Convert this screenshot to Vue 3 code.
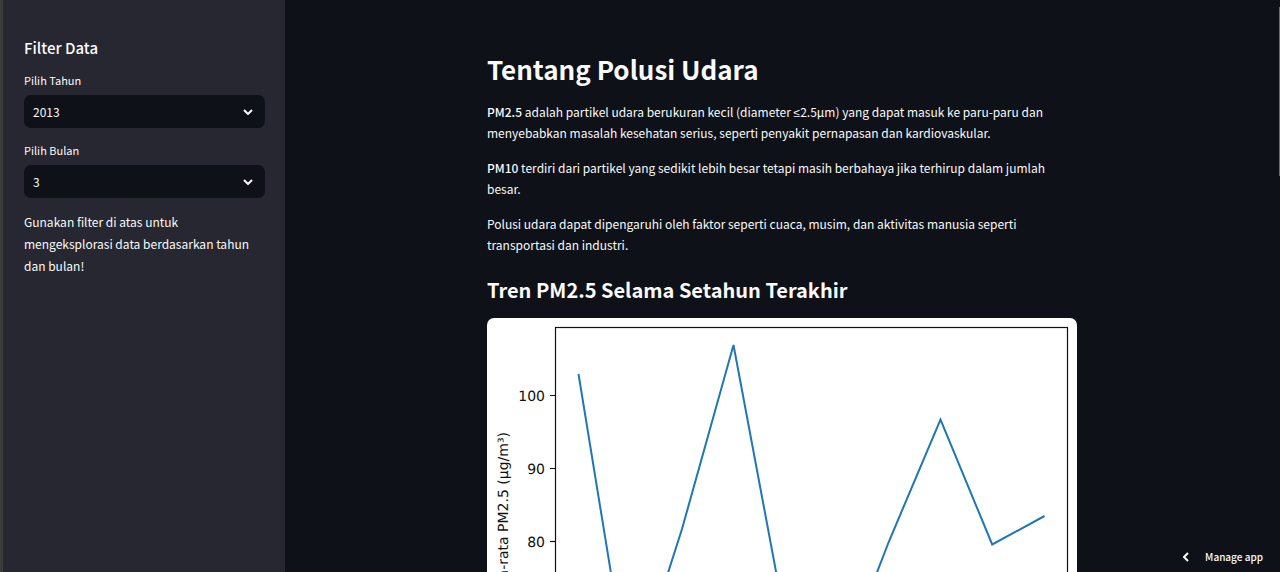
<script setup>
import { ref } from 'vue'

const year = ref('2013')
const month = ref('3')
const years = ['2013', '2014', '2015', '2016', '2017']
const months = Array.from({ length: 12 }, (_, i) => String(i + 1))

const ticks = [
  { label: '100', y: 77 },
  { label: '90', y: 150 },
  { label: '80', y: 223 },
  { label: '70', y: 296 },
  { label: '60', y: 369 }
]
const trend = [
  [91.5, 56], [143.2, 373], [195, 211], [246.5, 27], [298.3, 303],
  [350, 358], [401.7, 224], [453.5, 101.5], [505.2, 226.5], [557.5, 198]
].map((p) => p.join(',')).join(' ')
</script>

<template>
  <div class="app">
    <aside class="sidebar">
      <h2 class="filter-title">Filter Data</h2>
      <div class="field">
        <label for="year">Pilih Tahun</label>
        <div class="select-wrap">
          <select id="year" v-model="year">
            <option v-for="y in years" :key="y">{{ y }}</option>
          </select>
          <svg class="chevron" viewBox="0 0 10 6" aria-hidden="true"><path d="M1 1l4 4 4-4" /></svg>
        </div>
      </div>
      <div class="field">
        <label for="month">Pilih Bulan</label>
        <div class="select-wrap">
          <select id="month" v-model="month">
            <option v-for="m in months" :key="m">{{ m }}</option>
          </select>
          <svg class="chevron" viewBox="0 0 10 6" aria-hidden="true"><path d="M1 1l4 4 4-4" /></svg>
        </div>
      </div>
      <p class="hint">Gunakan filter di atas untuk mengeksplorasi data berdasarkan tahun dan bulan!</p>
    </aside>

    <main class="main">
      <article class="content">
        <h1>Tentang Polusi Udara</h1>
        <p><strong>PM2.5</strong> adalah partikel udara berukuran kecil (diameter <span class="math">≤</span>2.5µm) yang dapat masuk ke paru-paru dan menyebabkan masalah kesehatan serius, seperti penyakit pernapasan dan kardiovaskular.</p>
        <p><strong>PM10</strong> terdiri dari partikel yang sedikit lebih besar tetapi masih berbahaya jika terhirup dalam jumlah besar.</p>
        <p>Polusi udara dapat dipengaruhi oleh faktor seperti cuaca, musim, dan aktivitas manusia seperti transportasi dan industri.</p>
        <h2>Tren PM2.5 Selama Setahun Terakhir</h2>
        <figure class="chart">
          <svg viewBox="0 0 590 460" role="img" aria-label="Tren PM2.5">
            <rect class="axis" x="68.5" y="9.5" width="512" height="400" />
            <g v-for="t in ticks" :key="t.label">
              <line class="axis" x1="63" x2="68" :y1="t.y + 0.5" :y2="t.y + 0.5" />
              <text x="58" :y="t.y + 6" text-anchor="end">{{ t.label }}</text>
            </g>
            <text transform="translate(21 114) rotate(-90)" text-anchor="end">Rata-rata PM2.5 (µg/m³)</text>
            <polyline class="trend" :points="trend" />
          </svg>
        </figure>
      </article>
      <span class="scroll-thumb"></span>
      <button class="manage" type="button">
        <svg viewBox="0 0 6 10" aria-hidden="true"><path d="M5 1L1 5l4 4" /></svg>
        <span>Manage app</span>
      </button>
    </main>
  </div>
</template>

<style>
body {
  margin: 0;
  background: #0e1117;
}
</style>

<style scoped>
.app {
  display: flex;
  height: 100vh;
  overflow: hidden;
  color: #fafafa;
  background: #0e1117;
  font-family: "Noto Sans CJK SC", "Noto Sans", sans-serif;
  font-size: 12px;
  line-height: 21px;
}
h1, h2, p, figure {
  margin: 0;
}
.sidebar {
  box-sizing: border-box;
  flex: 0 0 285px;
  padding: 36px 20px 0 21px;
  border-left: 3px solid #3b3b39;
  background: #262730;
}
.filter-title {
  font-size: 15px;
  line-height: 24px;
  font-weight: 500;
  margin-bottom: 10px;
}
.field {
  margin-bottom: 12px;
}
.field label {
  display: block;
  font-size: 11px;
  line-height: 20px;
  margin-bottom: 5px;
}
.select-wrap {
  position: relative;
}
select {
  display: block;
  width: 100%;
  height: 33px;
  padding: 0 32px 0 9px;
  border: 0;
  border-radius: 7px;
  appearance: none;
  background: #0e1117;
  color: inherit;
  font: inherit;
}
.chevron {
  position: absolute;
  right: 12px;
  top: 14px;
  width: 10px;
  height: 6px;
}
path {
  fill: none;
  stroke: #fafafa;
  stroke-width: 2;
}
.hint {
  margin-top: 13px;
  line-height: 22px;
}
.main {
  position: relative;
  flex: 1;
  min-width: 0;
  padding-right: 1px;
  overflow: hidden;
}
.content {
  max-width: 590px;
  margin: 0 auto;
  padding-top: 49px;
}
h1 {
  font-size: 26px;
  line-height: 40px;
  font-weight: 700;
  margin-bottom: 12px;
}
.content p {
  margin-bottom: 14px;
}
.content p strong {
  font-weight: 500;
}
.math {
  font-family: "Noto Sans", sans-serif;
  line-height: 1;
}
.content h2 {
  font-size: 20px;
  line-height: 30px;
  font-weight: 700;
  margin: 20px 0 13px;
}
.chart {
  overflow: hidden;
  border-radius: 7px;
  background: #fff;
}
.chart svg {
  display: block;
  width: 100%;
}
.chart text {
  font-family: "DejaVu Sans", sans-serif;
  font-size: 14px;
  fill: #111;
  text-rendering: geometricPrecision;
}
.axis {
  fill: none;
  stroke: #111;
  stroke-width: 1.2;
}
.trend {
  fill: none;
  stroke: #1f77b4;
  stroke-width: 2;
}
.scroll-thumb {
  position: absolute;
  right: 0;
  top: 7px;
  width: 1px;
  height: 169px;
  background: #6b6c70;
}
.manage {
  position: absolute;
  right: 0;
  bottom: 0;
  display: flex;
  align-items: center;
  gap: 16px;
  padding: 4px 17px 5px 16px;
  border: 0;
  background: #0e1117;
  color: #fafafa;
  font-family: inherit;
  font-size: 10px;
  font-weight: 500;
  line-height: 20px;
}
.manage svg {
  width: 6px;
  height: 10px;
}
</style>
